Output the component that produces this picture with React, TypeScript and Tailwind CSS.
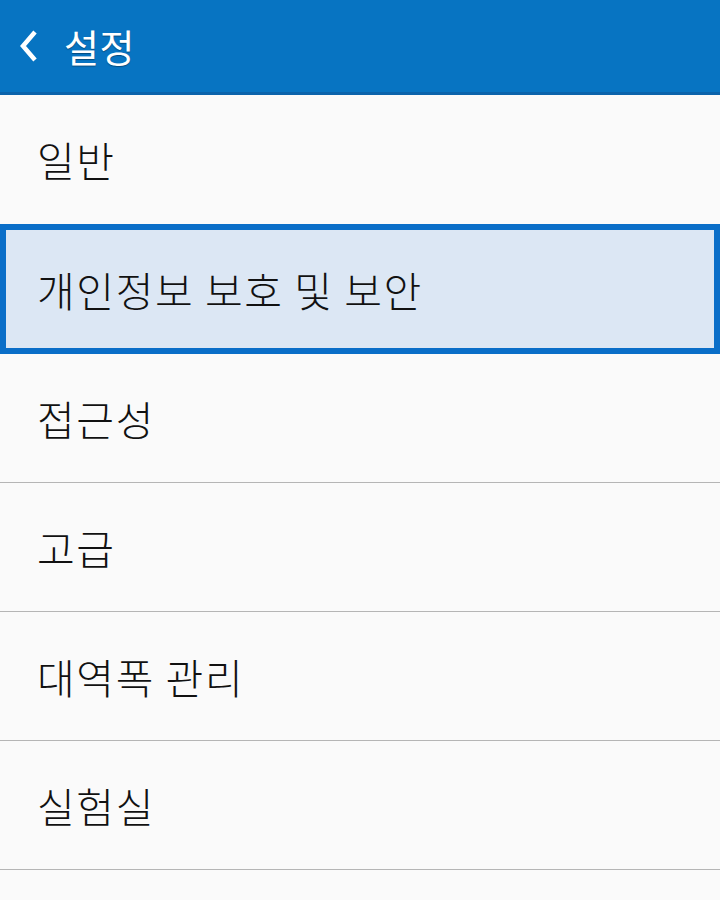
import React from 'react'

const items = ['접근성', '고급', '대역폭 관리', '실험실']

export default function App() {
  return (
    <div
      className="w-[720px] h-[900px] overflow-hidden bg-[#fafafa] text-[#111111]"
      style={{ fontFamily: '"Noto Sans CJK KR", "Noto Sans", sans-serif' }}
    >
      {/* Action bar */}
      <div className="h-[95px] bg-[#0774c2] border-b-[3px] border-[#0b63ab] flex items-center">
        <svg width="18" height="32" viewBox="0 0 18 32" className="ml-[20px]">
          <polyline
            points="15,2 3,16 15,30"
            fill="none"
            stroke="#ffffff"
            strokeWidth="4.5"
            strokeLinejoin="miter"
          />
        </svg>
        <span className="ml-[26px] text-white text-[38px] leading-none tracking-[0.5px] [text-shadow:0_1px_1px_rgba(0,0,0,0.35)]">
          설정
        </span>
      </div>

      {/* List */}
      <div className="h-[129px] flex items-center pl-[37px] text-[41px] font-light tracking-[1.6px] leading-none">
        일반
      </div>
      <div className="h-[130px] flex items-center pl-[31px] text-[41px] font-light tracking-[1.6px] leading-none bg-[#dce7f4] border-[6px] border-[#0a6ec8]">
        개인정보 보호 및 보안
      </div>
      {items.map((label) => (
        <div
          key={label}
          className="h-[129px] flex items-center pl-[37px] text-[41px] font-light tracking-[1.6px] leading-none border-b border-[#b5b5b5]"
        >
          {label}
        </div>
      ))}
    </div>
  )
}
